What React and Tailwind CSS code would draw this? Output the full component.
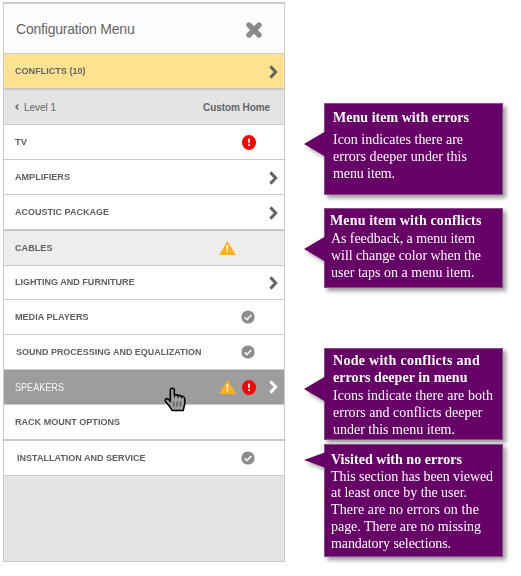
import { useLayoutEffect, useRef } from "react";

// One line of text that spans `width` pixels, by tracking or, with `condense`,
// by narrowing the glyphs themselves.
function Line({ text, width, condense = false, className = "" }) {
  const ref = useRef(null);
  useLayoutEffect(() => {
    const el = ref.current;
    el.style.letterSpacing = "0px";
    el.style.transform = "none";
    const natural = el.getBoundingClientRect().width;
    if (condense) {
      el.style.transform = `scaleX(${width / natural})`;
    } else {
      el.style.letterSpacing = `${(width - natural) / text.length}px`;
    }
  }, [text, width, condense]);
  return (
    <span ref={ref} className={`inline-block origin-left whitespace-pre ${className}`}>
      {text}
    </span>
  );
}

function Chevron({ className }) {
  return (
    <svg viewBox="0 0 9 14" className={`h-3.5 w-[9px] ${className}`} fill="none" stroke="currentColor" strokeWidth="3">
      <path d="M1.4 1.4 L6.7 7 L1.4 12.6" />
    </svg>
  );
}

function ErrorIcon() {
  return (
    <svg viewBox="0 0 14 15" className="h-[15px] w-3.5">
      <ellipse cx="7" cy="7.5" rx="7" ry="7.5" fill="#ff0000" />
      <path d="M6 3.8h2l-.3 4.5H6.3z M6.1 9.3h1.8v1.7H6.1z" fill="#fff" />
    </svg>
  );
}

function WarningIcon() {
  return (
    <svg viewBox="0 0 17 14" className="h-3.5 w-[17px]">
      <path d="M8.5 0 L17 14 H0 Z" fill="#ffb01f" />
      <path d="M7.4 4h1.8l-.3 4.6H7.7z M7.5 9.6h1.6v1.6H7.5z" fill="#fff" />
    </svg>
  );
}

function CheckIcon() {
  return (
    <svg viewBox="0 0 14 14" className="h-3.5 w-3.5">
      <circle cx="7" cy="7" r="6.6" fill="#8b8b8b" />
      <path d="M3.6 7.4 L6 9.5 L10.4 4.9" fill="none" stroke="#eee" strokeWidth="1.8" />
    </svg>
  );
}

function CloseIcon() {
  return (
    <svg viewBox="0 0 16 16" className="h-4 w-4" stroke="#8a8a8a" strokeWidth="5.4" strokeLinecap="round">
      <path d="M3 3 L13 13 M13 3 L3 13" />
    </svg>
  );
}

function HandCursor() {
  return (
    <svg viewBox="0 0 22 25" className="absolute left-[160px] top-[17px] z-10 h-[25px] w-[22px]">
      <path
        d="M6.3 14.6 V3.2 Q6.3 1.2 8.3 1.2 Q10.3 1.2 10.3 3.2 V8 Q12.5 7 14 8.6 Q16 7.9 17.3 9.4 Q20.8 9 20.8 12.4 V16.5 L19.2 23.6 H8.3 L5.6 19.5 L1.4 14.2 Q.7 12.3 2.6 11.5 Q4.3 11.3 6.3 14.6 Z"
        fill="#9d9d9d" stroke="#000" strokeWidth="1.5" strokeLinejoin="round"
      />
      <path d="M10.5 8 V10.5 M14 9 V11 M17.5 10 V11.5" stroke="#000" strokeWidth="1" />
      <path d="M9.8 14.5 V19.5 M13 14.5 V19.5 M16.2 14.5 V19.5" stroke="#444" strokeWidth="1" />
    </svg>
  );
}

const ITEMS = [
  { text: "TV", width: 12, error: true, box: "h-[35px] border-b bg-white pl-[11px]" },
  { text: "AMPLIFIERS", width: 55, chevron: true, nudge: "mt-0.5", box: "h-[35px] border-b bg-white pl-[11px]" },
  { text: "ACOUSTIC PACKAGE", width: 94, chevron: true, nudge: "mt-px", box: "h-9 border-b-2 bg-white pl-[11px]" },
  { text: "CABLES", width: 37.5, warning: true, box: "h-[35px] border-b bg-[#ededed] pl-[11px]" },
  { text: "LIGHTING AND FURNITURE", width: 119.5, chevron: true, box: "h-[34px] border-b bg-white pl-[11px]" },
  { text: "MEDIA PLAYERS", width: 73.5, check: true, box: "h-[35px] border-b bg-white pl-[11px]" },
  { text: "SOUND PROCESSING AND EQUALIZATION", width: 185.5, check: true, box: "h-[35px] border-b bg-white pl-[11.5px]" },
  { text: "SPEAKERS", width: 49, warning: true, error: true, chevron: true, active: true, box: "h-[35px] border-b bg-[#9d9d9d] pl-[11px]" },
  { text: "RACK MOUNT OPTIONS", width: 105, box: "h-9 border-b-2 bg-white pl-[11px]" },
  { text: "INSTALLATION AND SERVICE", width: 128.5, check: true, box: "h-[35px] border-b bg-white pl-[13px]" },
];

function MenuItem({ item }) {
  return (
    <div className={`relative flex items-center justify-between border-[#c9c9c9] pr-[7px] ${item.box}`}>
      <div className="flex w-[190px] shrink-0">
        <Line
          condense
          text={item.text}
          width={item.width}
          className={item.active ? "text-[10px] text-[#f5f5f5]" : "text-[9.6px] font-bold text-[#5f5f5f]"}
        />
      </div>
      <div className="flex shrink-0 items-center">
        <span className="w-[17px]">{item.warning && <WarningIcon />}</span>
        <span className="ml-1.5 w-3.5">
          {item.error && <ErrorIcon />}
          {item.check && <span className="-ml-px block"><CheckIcon /></span>}
        </span>
        <span className={`-mr-px ml-[13px] w-[9px] ${item.nudge ?? ""}`}>
          {item.chevron && <Chevron className={item.active ? "text-white" : "text-[#646464]"} />}
        </span>
      </div>
      {item.active && <HandCursor />}
    </div>
  );
}

const NOTES = [
  {
    box: "mt-[103px] h-[92px] pl-2 pt-[5px]",
    arrow: "top-[27px] h-[26px]",
    lines: [
      ["Menu item with errors", 136, "font-bold"],
      ["Icon indicates there are", 130, "mt-[5px]"],
      ["errors deeper under this", 134, ""],
      ["menu item.", 62, ""],
    ],
  },
  {
    box: "mt-[13px] h-20 pl-1.5 pt-[3px]",
    arrow: "top-[27px] h-[26px]",
    lines: [
      ["Menu item with conflicts", 151.5, "font-bold -ml-px"],
      ["As feedback, a menu item", 144, "mt-px"],
      ["will change color when the", 150, ""],
      ["user taps on a menu item.", 143.5, ""],
    ],
  },
  {
    box: "mt-[60px] h-[92px] pl-2 pt-[3px]",
    arrow: "top-[27px] h-[26px]",
    lines: [
      ["Node with conflicts and", 147, "font-bold"],
      ["errors deeper in menu", 134.5, "font-bold"],
      ["Icons indicate there are both", 160, "mt-px"],
      ["errors and conflicts deeper", 149.5, ""],
      ["under this menu item.", 122, ""],
    ],
  },
  {
    box: "mt-1 h-[113px] pl-1.5 pt-1.5",
    arrow: "top-[7px] h-4",
    lines: [
      ["Visited with no errors", 131, "font-bold"],
      ["This section has been viewed", 162, ""],
      ["at least once by the user.", 136, "-mt-px"],
      ["There are no errors on the", 148, ""],
      ["page. There are no missing", 150, ""],
      ["mandatory selections.", 120, ""],
    ],
  },
];

function Note({ note }) {
  return (
    <div
      className={`relative w-[179px] shrink-0 border border-[#8d4a8d] bg-[#660066] font-['Liberation_Serif',serif] text-[14px] leading-[17px] text-white drop-shadow-[3px_3px_2px_rgba(0,0,0,0.4)] ${note.box}`}
    >
      <div className={`absolute -left-[21px] w-[22px] bg-[#660066] [clip-path:polygon(0_50%,100%_0,100%_100%)] ${note.arrow}`} />
      {note.lines.map(([text, width, cls]) => (
        <div key={text} className={`flex h-[17px] ${cls}`}>
          <Line text={text} width={width} />
        </div>
      ))}
    </div>
  );
}

export default function App() {
  return (
    <div className="flex h-[576px] w-[521px] overflow-hidden bg-white font-['Liberation_Sans',Arial,sans-serif]">
      <div className="ml-[3px] mt-0.5 flex h-[560px] w-[282px] shrink-0 flex-col border border-t-2 border-[#c9c9c9] bg-[#e4e4e4] text-[#646464]">
        <div className="flex h-[50px] shrink-0 items-center justify-between border-b border-[#c9c9c9] bg-[#fdfdfd] pl-3 pr-[22px]">
          <Line text="Configuration Menu" width={118.5} className="mt-0.5 text-[14px]" />
          <span className="mt-[3px]"><CloseIcon /></span>
        </div>
        <div className="flex h-9 shrink-0 items-center justify-between border-b-2 border-[#c9c9c9] bg-[#fde28f] pl-[11px] pr-1.5">
          <Line condense text="CONFLICTS (10)" width={70.5} className="text-[9.6px] font-bold" />
          <Chevron className="mt-px text-[#646464]" />
        </div>
        <div className="flex h-[35px] shrink-0 items-center justify-between border-b border-[#c9c9c9] pl-[11px] pr-3.5 text-[10px]">
          <div className="flex items-center gap-[5px]">
            <svg viewBox="0 0 4 6" className="h-1.5 w-1" fill="none" stroke="currentColor" strokeWidth="1.5">
              <path d="M3.3 .5 L1 3 L3.3 5.5" />
            </svg>
            <Line text="Level 1" width={32} />
          </div>
          <Line text="Custom Home" width={67} className="font-bold" />
        </div>
        {ITEMS.map((item) => (
          <MenuItem key={item.text} item={item} />
        ))}
      </div>
      <div className="ml-[39px] flex flex-col">
        {NOTES.map((note) => (
          <Note key={note.lines[0][0]} note={note} />
        ))}
      </div>
    </div>
  );
}
